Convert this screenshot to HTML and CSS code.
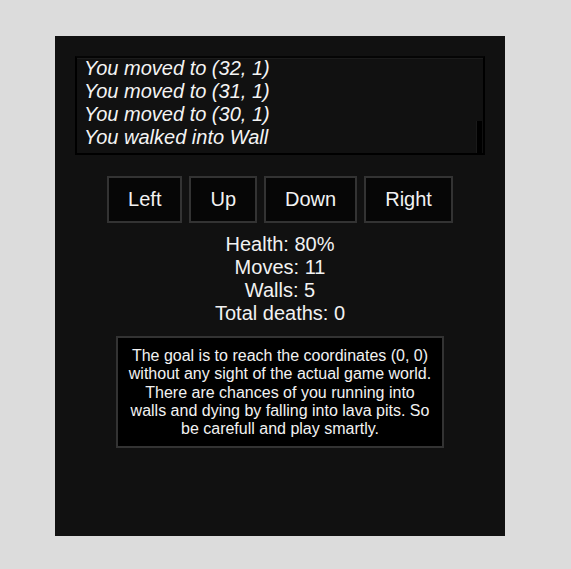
FILE: index.html
```html
<!DOCTYPE html>
<html>
<head>
<meta charset="utf-8">
<link rel="stylesheet" href="styles.css">
</head>
<body>
<div class="panel">
  <div class="log">
    <div class="log-inner">
      <div>You moved to (32, 1)</div>
      <div>You moved to (31, 1)</div>
      <div>You moved to (30, 1)</div>
      <div>You walked into Wall</div>
    </div>
    <div class="thumb"></div>
  </div>
  <div class="controls">
    <button class="btn">Left</button>
    <button class="btn">Up</button>
    <button class="btn">Down</button>
    <button class="btn">Right</button>
  </div>
  <div class="stats">
    <div>Health: 80%</div>
    <div>Moves: 11</div>
    <div>Walls: 5</div>
    <div>Total deaths: 0</div>
  </div>
  <div class="info">The goal is to reach the coordinates (0, 0) without any sight of the actual game world. There are chances of you running into walls and dying by falling into lava pits. So be carefull and play smartly.</div>
</div>
</body>
</html>
```
FILE: styles.css
```css
html, body {
  margin: 0;
  background: #dcdcdc;
}
body {
  padding: 36px 0 0 55px;
  font-family: "Liberation Sans", Arial, sans-serif;
  color: #f2f2f2;
}
.panel {
  width: 450px;
  height: 500px;
  box-sizing: border-box;
  background: #111111;
  padding: 20px;
  display: flex;
  flex-direction: column;
  align-items: center;
}
.log {
  position: relative;
  width: 410px;
  height: 99px;
  box-sizing: border-box;
  border: 2px solid #000;
  border-top-color: #050505;
  overflow: hidden;
  display: flex;
  flex-direction: column;
  justify-content: flex-end;
  background: #111111;
  box-shadow: inset 0 1px 0 #1c1c1c;
}
.thumb {
  position: absolute;
  right: 1px;
  bottom: 0;
  width: 5px;
  height: 32px;
  background: #000;
  box-shadow: -1px 0 0 #1a1a1a;
}
.log-inner {
  padding: 0 7px 4px;
  font-size: 20px;
  line-height: 23px;
  font-style: italic;
  color: #f4f4f4;
}
.controls {
  display: flex;
  gap: 7px;
  margin-top: 21px;
}
.btn {
  font-family: "Liberation Sans", Arial, sans-serif;
  font-size: 20px;
  line-height: 23px;
  color: #f2f2f2;
  background: #060606;
  border: 2px solid #333;
  padding: 10px 19px;
  margin: 0;
}
.stats {
  margin-top: 10px;
  text-align: center;
  font-size: 20px;
  line-height: 23px;
}
.info {
  margin-top: 11px;
  width: 328px;
  box-sizing: border-box;
  border: 2px solid #333;
  background: #000;
  padding: 9px 10px 8px;
  text-align: center;
  font-size: 16px;
  line-height: 18.3px;
}
```
